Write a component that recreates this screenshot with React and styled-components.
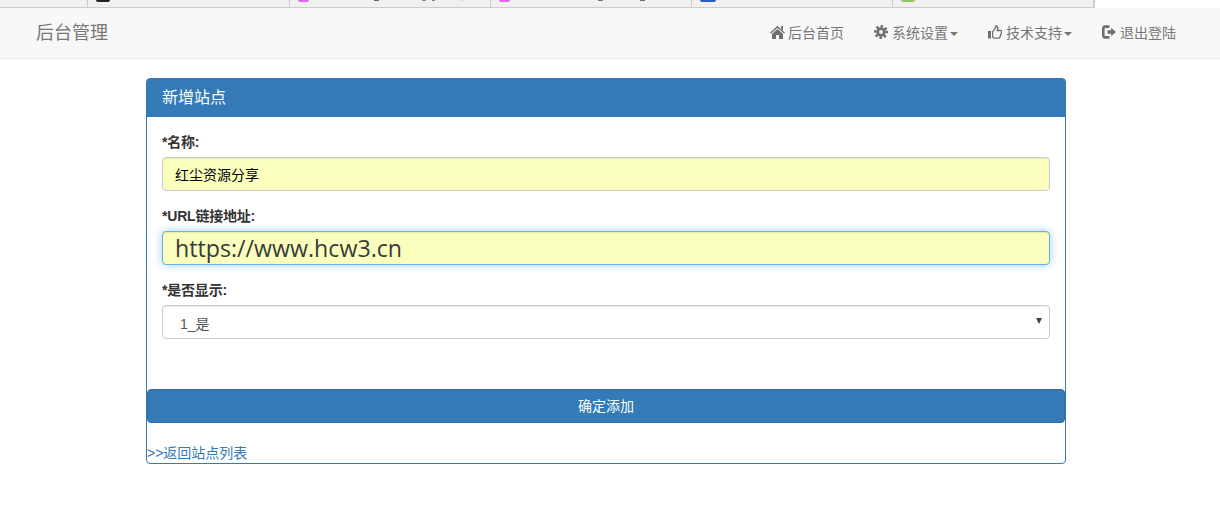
import React from "react";
import styled, { createGlobalStyle } from "styled-components";

const Global = createGlobalStyle`
  html, body { margin: 0; padding: 0; background: #fff; }
  body { font-family: "Liberation Sans", "Noto Sans CJK SC", sans-serif; font-size: 14px; color: #333; }
  * { box-sizing: border-box; }
`;
const TabStrip = styled.div`
  display: flex; height: 8px; width: 1095px; background: #f0f0f0;
  border-bottom: 1px solid #ccc; border-right: 1px solid #ccc;
`;
const Tab = styled.div`
  display: flex; align-items: flex-start; width: ${p => p.$w}px; height: 7px; border-right: 1px solid #ccc; padding-left: 8px;
`;
const Favicon = styled.span`
  display: block; width: ${p => p.$w || 14}px; height: 2px; background: ${p => p.$c}; border-radius: 0 0 2px 2px;
`;
const Descender = styled.span`
  display: block; width: ${p => p.$w}px; height: 1px; margin-left: ${p => p.$m}px; background: ${p => p.$c};
`;
const Navbar = styled.nav`
  display: flex; align-items: center; justify-content: space-between; height: 51px;
  background: #f8f8f8; border-bottom: 1px solid #e7e7e7; padding: 0 29px 0 36px;
`;
const Brand = styled.div`font-size: 18px; color: #777; line-height: 20px;`;
const Menu = styled.div`display: flex; align-items: center;`;
const Item = styled.a`
  display: flex; align-items: center; color: #777; font-size: 14px; line-height: 20px; padding: 0 15px;
`;
const Glyph = styled.svg`
  display: block; width: ${p => p.$w || 14}px; height: 14px; margin-right: ${p => p.$mr ?? 4}px; margin-top: -2px; color: #6f6f6f;
`;
const Caret = styled.i`
  display: inline-block; width: 0; height: 0; margin-left: 2px; margin-top: 2px;
  border-top: 4px solid #777; border-left: 4px solid transparent; border-right: 4px solid transparent;
`;
const Panel = styled.section`
  width: 920px; height: 386px; margin: 19px 0 0 146px; border: 1px solid #337ab7; border-radius: 4px;
  display: flex; flex-direction: column;
`;
const PanelHead = styled.h3`
  margin: 0; height: 38px; background: #337ab7; color: #fff; font-size: 16px; font-weight: 400;
  line-height: 38px; padding-left: 15px; flex: none;
`;
const Form = styled.div`padding: 15px 15px 0;`;
const Field = styled.div`margin-bottom: 15px;`;
const Label = styled.label`
  display: block; font-weight: 700; font-size: 14px; line-height: 20px; margin-bottom: 5px; letter-spacing: -0.2px;
`;
const Input = styled.div`
  height: 34px; border-radius: 4px; background: #faffbd; padding: 0 12px ${p => p.$big ? 0 : 1}px;
  display: flex; align-items: center; color: ${p => p.$big ? "#3a3a3a" : "#000"};
  font-size: ${p => p.$big ? "23.2px" : "14px"};
  font-family: ${p => p.$big ? '"Open Sans", sans-serif' : "inherit"};
  border: 1px solid ${p => p.$focus ? "#66afe9" : "#ccc"};
  box-shadow: ${p => p.$focus ? "inset 0 1px 1px rgba(0,0,0,.075), 0 0 8px rgba(102,175,233,.6)" : "inset 0 1px 1px rgba(0,0,0,.075)"};
`;
const Select = styled.div`
  height: 34px; border-radius: 4px; background: #fff; border: 1px solid #ccc; color: #555;
  padding: 1px 7px 0 17px; display: flex; align-items: center; justify-content: space-between; font-size: 14px;
  box-shadow: inset 0 1px 1px rgba(0,0,0,.075);
`;
const Arrow = styled.i`
  width: 0; height: 0; border-top: 6px solid #444; border-left: 3px solid transparent; border-right: 3px solid transparent;
  margin-top: -3px;
`;
const Submit = styled.button`
  display: block; width: 918px; height: 34px; margin-top: 35px; background: #337ab7; border: 1px solid #2e6da4;
  border-radius: 4px; color: #fff; font: inherit; font-size: 14px; padding: 0 0 2px; flex: none;
`;
const Back = styled.a`display: block; color: #337ab7; font-size: 14px; line-height: 20px; margin-top: 20px;`;

const HomeIcon = () => (
  <Glyph $w={15} $mr={3} viewBox="0 0 15 14" fill="currentColor">
    <path d="M7.5 .8 15 7.8l-.9 1L7.5 2.8.9 8.8 0 7.8z" />
    <path d="M11 1.2h2v4.2l-2-1.9zM7.5 4 13 9v5H9V10H6v4H2V9z" />
  </Glyph>
);
const CogIcon = () => (
  <Glyph viewBox="0 0 14 14" fill="none" stroke="currentColor">
    <circle cx="7" cy="7" r="3.4" strokeWidth="2.8" />
    <circle cx="7" cy="7" r="5.7" strokeWidth="2.6" strokeDasharray="2.4 2.077" transform="rotate(-11 7 7)" />
  </Glyph>
);
const ThumbIcon = () => (
  <Glyph viewBox="0 0 14 14" fill="none">
    <rect x="0" y="6" width="3" height="7.5" fill="currentColor" />
    <path d="M4.6 6.6 7.6 3V.9c1.5 0 2.4 1.2 2.1 2.9L9.3 5.5h3.2c1 0 1.4.9 1.1 1.8l-1.7 4.9c-.2.6-.7.9-1.3.9H6.2L4.6 12z" stroke="currentColor" strokeWidth="1.3" />
  </Glyph>
);
const LogoutIcon = () => (
  <Glyph viewBox="0 0 14 14" fill="none">
    <path d="M7.5 1.6H3.2A1.9 1.9 0 0 0 1.3 3.5v7A1.9 1.9 0 0 0 3.2 12.4H7.5" stroke="currentColor" strokeWidth="2.6" />
    <path d="M5.5 5.2h3.7V2.8L14 7l-4.8 4.2V8.8H5.5z" fill="currentColor" />
  </Glyph>
);

export default function App() {
  return (
    <>
      <Global />
      <TabStrip>
        <Tab $w={88} />
        <Tab $w={202}><Favicon $c="#222" /></Tab>
        <Tab $w={201}>
          <Favicon $c="#d66be8" $w={11} />
          <Descender $w={5} $m={65} $c="#666" />
          <Descender $w={4} $m={43} $c="#6f8fb0" />
          <Descender $w={3} $m={6} $c="#5a8fc0" />
          <Descender $w={3} $m={25} $c="#ddd" />
        </Tab>
        <Tab $w={201}>
          <Favicon $c="#d66be8" $w={11} />
          <Descender $w={5} $m={88} $c="#5f7f99" />
          <Descender $w={5} $m={37} $c="#7a6a66" />
        </Tab>
        <Tab $w={201}><Favicon $c="#2a5fc4" $w={16} /></Tab>
        <Tab $w={201}><Favicon $c="#8fc66a" /></Tab>
      </TabStrip>
      <Navbar>
        <Brand>后台管理</Brand>
        <Menu>
          <Item><HomeIcon />后台首页</Item>
          <Item><CogIcon />系统设置<Caret /></Item>
          <Item><ThumbIcon />技术支持<Caret /></Item>
          <Item><LogoutIcon />退出登陆</Item>
        </Menu>
      </Navbar>
      <Panel>
        <PanelHead>新增站点</PanelHead>
        <Form>
          <Field>
            <Label>*名称:</Label>
            <Input>红尘资源分享</Input>
          </Field>
          <Field>
            <Label>*URL链接地址:</Label>
            <Input $big $focus>https://www.hcw3.cn</Input>
          </Field>
          <Field>
            <Label>*是否显示:</Label>
            <Select>1_是<Arrow /></Select>
          </Field>
        </Form>
        <Submit>确定添加</Submit>
        <Back>&gt;&gt;返回站点列表</Back>
      </Panel>
    </>
  );
}
